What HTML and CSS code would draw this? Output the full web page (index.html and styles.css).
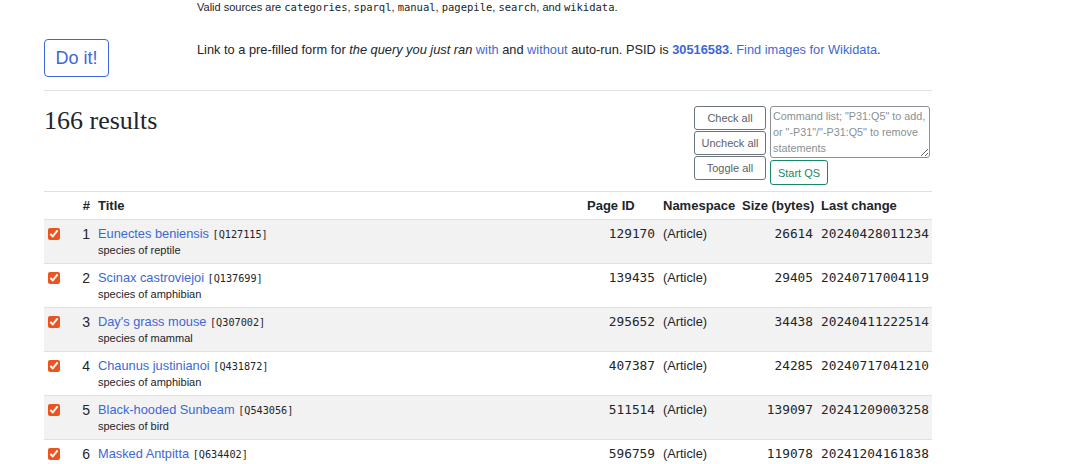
FILE: index.html
```html
<!DOCTYPE html>
<html>
<head>
<meta charset="utf-8">
<link rel="stylesheet" href="styles.css">
</head>
<body>
<div class="page">
  <div class="grid-row top-row">
    <div></div>
    <div class="hint">Valid sources are <code>categories</code>, <code>sparql</code>, <code>manual</code>, <code>pagepile</code>, <code>search</code>, and <code>wikidata</code>.</div>
  </div>
  <div class="grid-row doit-row">
    <div><button class="btn-doit">Do it!</button></div>
    <div class="linkline">Link to a pre-filled form for <em>the query you just ran</em> <a href="#">with</a> and <a href="#">without</a> auto-run. PSID is <a href="#" class="bold">30516583</a>. <a href="#">Find images for Wikidata</a>.</div>
  </div>
  <hr class="sep">
  <div class="results-head">
    <h2 class="results-title">166 results</h2>
    <div class="controls">
      <div class="btn-col">
        <button class="btn-sm">Check all</button>
        <button class="btn-sm">Uncheck all</button>
        <button class="btn-sm">Toggle all</button>
      </div>
      <div class="qs-col">
        <textarea class="cmd" placeholder='Command list; "P31:Q5" to add, or "-P31"/"-P31:Q5" to remove statements'></textarea>
        <button class="btn-qs">Start QS</button>
      </div>
    </div>
  </div>
  <table class="results">
    <colgroup>
      <col class="c-check"><col class="c-num"><col><col class="c-pid"><col class="c-ns"><col class="c-size"><col class="c-last">
    </colgroup>
    <thead>
      <tr><th></th><th class="num">#</th><th>Title</th><th>Page ID</th><th>Namespace</th><th>Size (bytes)</th><th>Last change</th></tr>
    </thead>
    <tbody>
      <tr>
        <td><input type="checkbox" checked></td><td class="num">1</td>
        <td><a href="#">Eunectes beniensis</a> <span class="qid">[Q127115]</span><div class="desc">species of reptile</div></td>
        <td class="mono r">129170</td><td>(Article)</td><td class="mono r">26614</td><td class="mono">20240428011234</td>
      </tr>
      <tr>
        <td><input type="checkbox" checked></td><td class="num">2</td>
        <td><a href="#">Scinax castroviejoi</a> <span class="qid">[Q137699]</span><div class="desc">species of amphibian</div></td>
        <td class="mono r">139435</td><td>(Article)</td><td class="mono r">29405</td><td class="mono">20240717004119</td>
      </tr>
      <tr>
        <td><input type="checkbox" checked></td><td class="num">3</td>
        <td><a href="#">Day's grass mouse</a> <span class="qid">[Q307002]</span><div class="desc">species of mammal</div></td>
        <td class="mono r">295652</td><td>(Article)</td><td class="mono r">34438</td><td class="mono">20240411222514</td>
      </tr>
      <tr>
        <td><input type="checkbox" checked></td><td class="num">4</td>
        <td><a href="#">Chaunus justinianoi</a> <span class="qid">[Q431872]</span><div class="desc">species of amphibian</div></td>
        <td class="mono r">407387</td><td>(Article)</td><td class="mono r">24285</td><td class="mono">20240717041210</td>
      </tr>
      <tr>
        <td><input type="checkbox" checked></td><td class="num">5</td>
        <td><a href="#">Black-hooded Sunbeam</a> <span class="qid">[Q543056]</span><div class="desc">species of bird</div></td>
        <td class="mono r">511514</td><td>(Article)</td><td class="mono r">139097</td><td class="mono">20241209003258</td>
      </tr>
      <tr>
        <td><input type="checkbox" checked></td><td class="num">6</td>
        <td><a href="#">Masked Antpitta</a> <span class="qid">[Q634402]</span><div class="desc">species of bird</div></td>
        <td class="mono r">596759</td><td>(Article)</td><td class="mono r">119078</td><td class="mono">20241204161838</td>
      </tr>
    </tbody>
  </table>
</div>
</body>
</html>
```

FILE: styles.css
```css
html, body {
  margin: 0;
  padding: 0;
  background: #fff;
}
body {
  font-family: "Liberation Sans", Arial, sans-serif;
  font-size: 13px;
  color: #212529;
  overflow: hidden;
}
.page {
  width: 888px;
  margin-left: 44px;
}
a {
  color: #3d68d4;
  text-decoration: none;
}
a.bold { font-weight: bold; }
.grid-row {
  display: grid;
  grid-template-columns: 153px 1fr;
}
.top-row {
  font-size: 11px;
  line-height: 14px;
}
.hint code {
  font-family: "DejaVu Sans Mono", monospace;
  font-size: 10.5px;
  color: #212529;
}
.doit-row {
  margin-top: 25px;
}
.btn-doit {
  font-family: "Liberation Sans", Arial, sans-serif;
  font-size: 18px;
  line-height: 22px;
  color: #3d68d4;
  background: #fff;
  border: 1px solid #3d68d4;
  border-radius: 4px;
  padding: 0;
  width: 65px;
  height: 38px;
  margin: 0;
  white-space: nowrap;
  box-sizing: border-box;
}
.linkline {
  padding-top: 2px;
  line-height: 18px;
  font-size: 12.8px;
}
.sep {
  border: 0;
  border-top: 1px solid #e3e3e3;
  margin: 13px 0 0 0;
  height: 0;
}
.results-head {
  display: flex;
  justify-content: space-between;
  align-items: flex-start;
  margin-top: 15px;
}
.results-title {
  font-family: "Liberation Serif", "Times New Roman", serif;
  font-weight: normal;
  font-size: 26px;
  line-height: 28px;
  margin: 1px 0 0 0;
  color: #212529;
}
.controls {
  display: flex;
  gap: 4px;
  margin-right: 2px;
}
.btn-col {
  display: flex;
  flex-direction: column;
  gap: 1px;
}
.btn-sm {
  font-family: "Liberation Sans", Arial, sans-serif;
  font-size: 11px;
  color: #5a6168;
  background: #fff;
  border: 1px solid #6c757d;
  border-radius: 3px;
  width: 72px;
  height: 24px;
  padding: 0;
  margin: 0;
}
.qs-col {
  display: flex;
  flex-direction: column;
  align-items: flex-start;
  gap: 2px;
}
.cmd {
  font-family: "Liberation Sans", Arial, sans-serif;
  font-size: 10.8px;
  line-height: 16px;
  width: 160px;
  height: 52px;
  box-sizing: border-box;
  border: 1px solid #8a9096;
  border-radius: 3px;
  padding: 1px 2px;
  margin: 0;
  resize: both;
}
.cmd::placeholder {
  color: #8a8f94;
}
.btn-qs {
  font-family: "Liberation Sans", Arial, sans-serif;
  font-size: 11px;
  color: #17876b;
  background: #fff;
  border: 1px solid #17876b;
  border-radius: 3px;
  width: 58px;
  height: 25px;
  padding: 0;
  margin: 0;
}
.results {
  width: 100%;
  margin-top: 6px;
  border-collapse: collapse;
  table-layout: fixed;
}
.c-check { width: 34px; }
.c-num { width: 16px; }
.c-pid { width: 76px; }
.c-ns { width: 79px; }
.c-size { width: 79px; }
.c-last { width: 115px; }
.results th {
  text-align: left;
  font-weight: bold;
  padding: 6px 4px 5px 4px;
  line-height: 16px;
  border-top: 1px solid #dee2e6;
  border-bottom: 1px solid #dee2e6;
  white-space: nowrap;
}
.results th.num, .results td.num { text-align: right; }
.results td {
  vertical-align: top;
  padding: 5px 4px 5px 4px;
  line-height: 18px;
  font-size: 12.8px;
  border-bottom: 1px solid #dee2e6;
  white-space: nowrap;
}
.results tbody tr:nth-child(odd) { background: #f2f2f2; }
.results td.num { font-size: 14px; }
.results input[type=checkbox] {
  margin: 3px 0 0 0;
  width: 12px;
  height: 12px;
  accent-color: #e95420;
  vertical-align: top;
}
.qid {
  font-family: "DejaVu Sans Mono", monospace;
  font-size: 10.2px;
  line-height: 10px;
}
.desc {
  font-size: 11px;
  line-height: 15px;
}
.mono {
  font-family: "DejaVu Sans Mono", monospace;
  font-size: 12.7px;
  line-height: 10px;
}
.r { text-align: right; }
```
